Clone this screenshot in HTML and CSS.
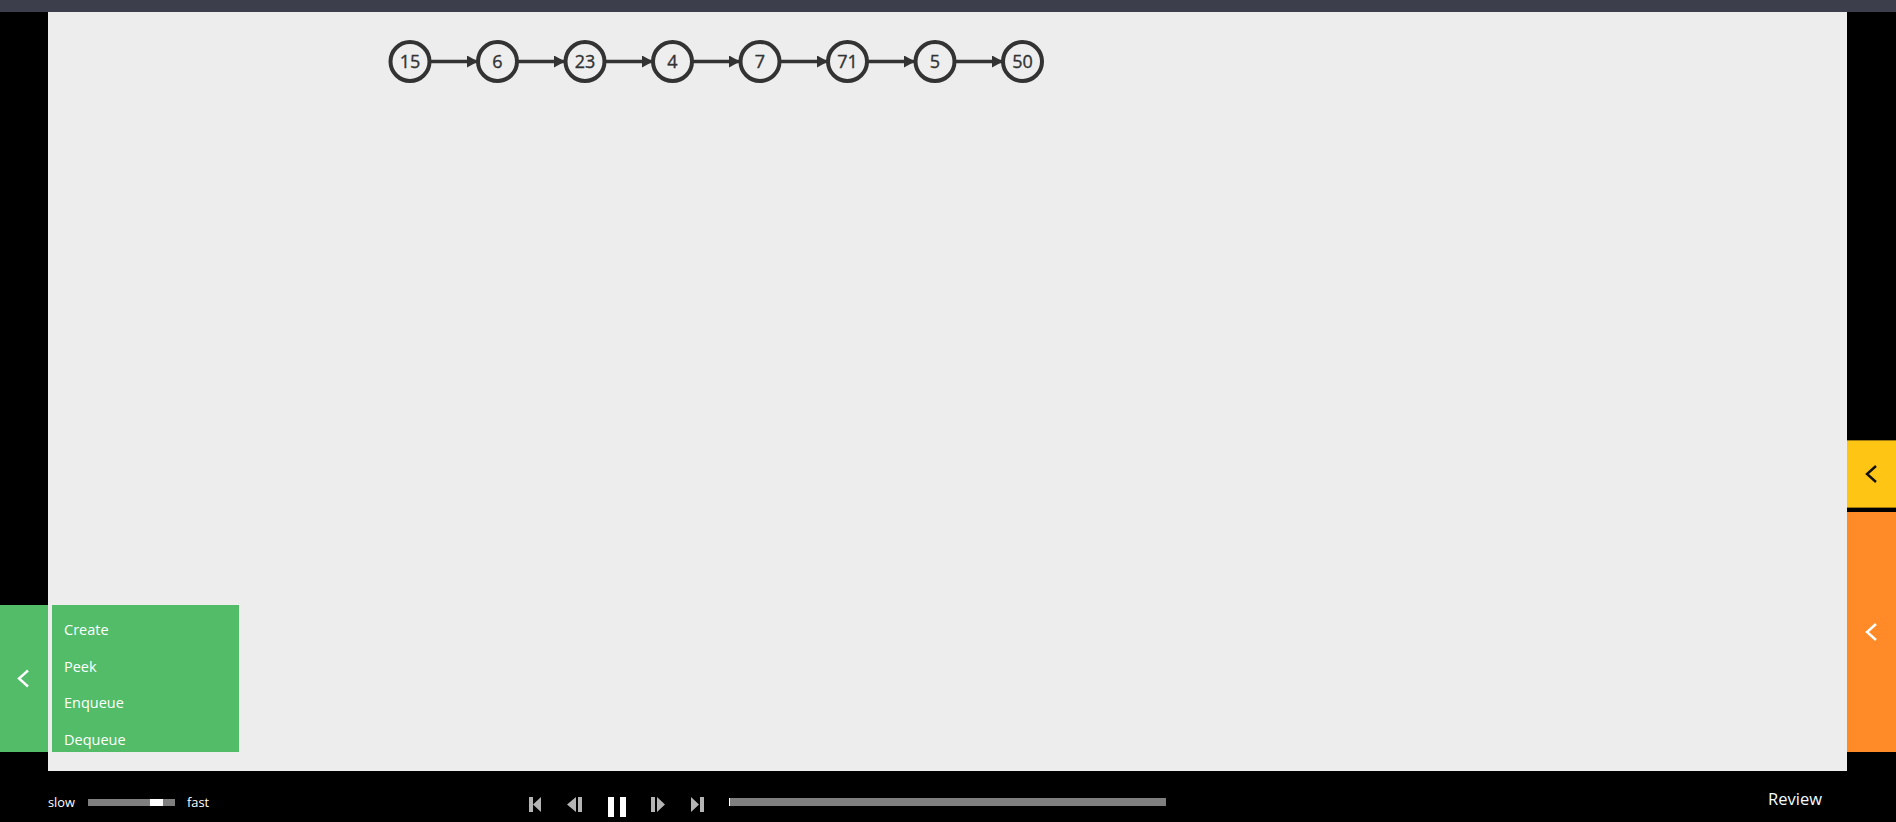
FILE: index.html
```html
<!DOCTYPE html>
<html lang="en">
<head>
<meta charset="utf-8">
<title>Queue</title>
<link rel="stylesheet" href="styles.css">
</head>
<body>
<div class="topbar"></div>
<div class="stage">
  <div class="rail rail-left">
    <button class="tab tab-green" aria-label="Open actions">
      <svg class="chev" viewBox="0 0 14 20"><path d="M11 1.5 2 9.5l9 8"/></svg>
    </button>
  </div>
  <main class="canvas">
    <svg class="diagram" width="1799" height="100" viewBox="48 12 1799 100">
      <defs>
        <marker id="arrow" markerWidth="11" markerHeight="12" refX="10" refY="6" orient="auto" markerUnits="userSpaceOnUse">
          <path class="head" d="M0 0 11 6 0 12z"/>
        </marker>
      </defs>
      <g class="edges">
        <line x1="431" y1="61.5" x2="477" y2="61.5" marker-end="url(#arrow)"/>
        <line x1="518" y1="61.5" x2="564" y2="61.5" marker-end="url(#arrow)"/>
        <line x1="606" y1="61.5" x2="652" y2="61.5" marker-end="url(#arrow)"/>
        <line x1="693" y1="61.5" x2="739" y2="61.5" marker-end="url(#arrow)"/>
        <line x1="781" y1="61.5" x2="827" y2="61.5" marker-end="url(#arrow)"/>
        <line x1="868" y1="61.5" x2="914" y2="61.5" marker-end="url(#arrow)"/>
        <line x1="956" y1="61.5" x2="1002" y2="61.5" marker-end="url(#arrow)"/>
      </g>
      <g class="nodes">
        <circle cx="410" cy="61.5" r="19.5"/><text x="410" y="68">15</text>
        <circle cx="497.5" cy="61.5" r="19.5"/><text x="497.5" y="68">6</text>
        <circle cx="585" cy="61.5" r="19.5"/><text x="585" y="68">23</text>
        <circle cx="672.5" cy="61.5" r="19.5"/><text x="672.5" y="68">4</text>
        <circle cx="760" cy="61.5" r="19.5"/><text x="760" y="68">7</text>
        <circle cx="847.5" cy="61.5" r="19.5"/><text x="847.5" y="68">71</text>
        <circle cx="935" cy="61.5" r="19.5"/><text x="935" y="68">5</text>
        <circle cx="1022.5" cy="61.5" r="19.5"/><text x="1022.5" y="68">50</text>
      </g>
    </svg>
    <ul class="menu">
      <li>Create</li>
      <li>Peek</li>
      <li>Enqueue</li>
      <li>Dequeue</li>
    </ul>
  </main>
  <div class="rail rail-right">
    <button class="tab tab-yellow" aria-label="Open status">
      <svg class="chev" viewBox="0 0 14 20"><path d="M11 2 2 10l9 8"/></svg>
    </button>
    <button class="tab tab-orange" aria-label="Open codetrace">
      <svg class="chev" viewBox="0 0 14 20"><path d="M11 2 2 10l9 8"/></svg>
    </button>
  </div>
</div>
<footer class="footer">
  <div class="speed">
    <span class="speed-label">slow</span>
    <div class="speed-track"><div class="speed-handle"></div></div>
    <span>fast</span>
  </div>
  <div class="controls">
    <svg class="ctl" width="12" height="15" viewBox="0 0 12 15"><path d="M0 0h4v15H0zM4 7.5 12 0v15z"/></svg>
    <svg class="ctl" width="15" height="15" viewBox="0 0 15 15"><path d="M0 7.5 9 0v15zM11 0h4v15h-4z"/></svg>
    <svg class="ctl-pause" width="18" height="20" viewBox="0 0 18 20"><path d="M0 0h6v20H0zM12 0h6v20h-6z"/></svg>
    <svg class="ctl" width="14" height="15" viewBox="0 0 14 15"><path d="M0 0h4v15H0zM6 0l8 7.5L6 15z"/></svg>
    <svg class="ctl" width="13" height="15" viewBox="0 0 13 15"><path d="M0 0l8 7.5L0 15zM9 0h4v15H9z"/></svg>
  </div>
  <div class="progress"><div class="progress-done"></div></div>
  <div class="review">Review</div>
</footer>
</body>
</html>
```
FILE: styles.css
```css
* { box-sizing: border-box; }
html, body { margin: 0; height: 822px; overflow: hidden; }
body { background: #000; color: #fff; font-family: "Open Sans", "Noto Sans", sans-serif; display: flex; flex-direction: column; }
.topbar { height: 12px; background: #3c3e4b; flex: none; }
.stage { height: 759px; flex: none; display: flex; }
.rail { flex: none; display: flex; flex-direction: column; justify-content: flex-end; padding-bottom: 19px; }
.rail-left { width: 48px; }
.rail-right { width: 49px; }
.tab { border: 0; padding: 0; margin: 0; display: flex; align-items: center; justify-content: center; width: 100%; }
.tab-green { height: 147px; background: #52bc69; color: #fff; }
.tab-yellow { height: 68px; margin-bottom: 4px; background: #ffc515; color: #111; border-top: 1px solid #a07c10; border-bottom: 1px solid #a07c10; }
.tab-orange { height: 240px; background: #ff8a27; color: #fff; }
.chev { width: 14px; height: 20px; fill: none; stroke: currentColor; stroke-width: 2.4; }
.canvas { flex: 1; background: #ededed; position: relative; overflow: hidden; }
.diagram { display: block; }
.edges line { stroke: #333; stroke-width: 3.5; }
.head { fill: #333; }
.nodes circle { fill: #eee; stroke: #333; stroke-width: 4; }
.nodes text { fill: #333; stroke: #333; stroke-width: 0.35; font-size: 18px; text-anchor: middle; font-family: "Open Sans", sans-serif; }
.menu { position: absolute; left: 4px; bottom: 19px; width: 187px; height: 147px; margin: 0; padding: 0; list-style: none; background: #52bc69; overflow: hidden; font-size: 14.5px; }
.menu li { height: 36.5px; padding: 7px 0 0 12px; line-height: 36px; }
.footer { flex: 1; display: flex; align-items: flex-start; font-size: 12.8px; }
.speed { margin-left: 48px; margin-top: 21px; width: 170px; display: flex; align-items: center; gap: 12px; line-height: 20px; }
.speed-label { width: 28px; }
.speed-track { width: 87px; height: 7px; background: #7f7f7f; position: relative; }
.speed-handle { position: absolute; left: 62px; top: 0; width: 13px; height: 7px; background: #fff; }
.controls { margin-left: 311px; margin-right: 25px; margin-top: 26px; width: 175px; display: flex; align-items: flex-start; justify-content: space-between; }
.ctl { fill: #b4b4b4; flex: none; }
.ctl-pause { fill: #fff; flex: none; }
.progress { margin-top: 27px; width: 437px; height: 8px; background: #7f7f7f; }
.progress-done { width: 1px; height: 8px; background: #fff; }
.review { margin-left: auto; margin-right: 74px; margin-top: 16px; font-size: 16.5px; color: #f2fcff; line-height: 24px; }
```
